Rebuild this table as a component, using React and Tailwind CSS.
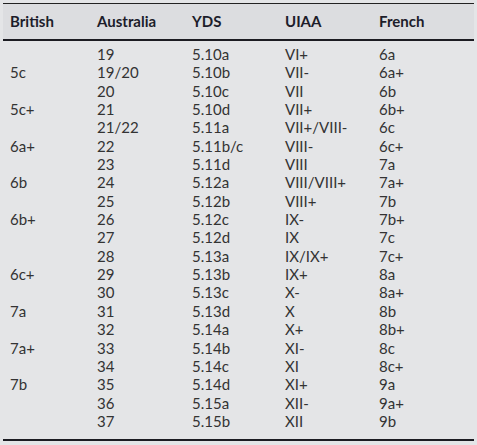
const rows = [
  ["", "19", "5.10a", "VI+", "6a"],
  ["5c", "19/20", "5.10b", "VII-", "6a+"],
  ["", "20", "5.10c", "VII", "6b"],
  ["5c+", "21", "5.10d", "VII+", "6b+"],
  ["", "21/22", "5.11a", "VII+/VIII-", "6c"],
  ["6a+", "22", "5.11b/c", "VIII-", "6c+"],
  ["", "23", "5.11d", "VIII", "7a"],
  ["6b", "24", "5.12a", "VIII/VIII+", "7a+"],
  ["", "25", "5.12b", "VIII+", "7b"],
  ["6b+", "26", "5.12c", "IX-", "7b+"],
  ["", "27", "5.12d", "IX", "7c"],
  ["", "28", "5.13a", "IX/IX+", "7c+"],
  ["6c+", "29", "5.13b", "IX+", "8a"],
  ["", "30", "5.13c", "X-", "8a+"],
  ["7a", "31", "5.13d", "X", "8b"],
  ["", "32", "5.14a", "X+", "8b+"],
  ["7a+", "33", "5.14b", "XI-", "8c"],
  ["", "34", "5.14c", "XI", "8c+"],
  ["7b", "35", "5.14d", "XI+", "9a"],
  ["", "36", "5.15a", "XII-", "9a+"],
  ["", "37", "5.15b", "XII", "9b"],
];

const headers = ["British", "Australia", "YDS", "UIAA", "French"];

const colClass = "grid grid-cols-[87px_95px_93px_94px_1fr]";

export default function App() {
  return (
    <div
      className="w-[477px] h-[445px] bg-[#e4e5e7] pt-[3px] px-[3px] overflow-hidden"
      style={{ fontFamily: "Lato, 'Liberation Sans', sans-serif" }}
    >
      <div className="w-[471px]">
        {/* HEADER */}
        <div
          className={`${colClass} h-[38px] items-center bg-[#dcdde0] border-t border-[#222] border-b-2 border-b-[#1c1c22] pl-[7px] text-[15px] font-bold text-[#1d1d2b]`}
        >
          {headers.map((h) => (
            <span key={h}>{h}</span>
          ))}
        </div>

        {/* BODY */}
        <div className="pt-[4px] pb-[9px] pl-[7px] border-b-2 border-[#1c1c22] text-[15px] text-[#333]">
          {rows.map((r, i) => (
            <div key={i} className={`${colClass} h-[18.35px] leading-[18.35px]`}>
              {r.map((c, j) => (
                <span key={j} className="whitespace-nowrap">
                  {c}
                </span>
              ))}
            </div>
          ))}
        </div>
      </div>
    </div>
  );
}
